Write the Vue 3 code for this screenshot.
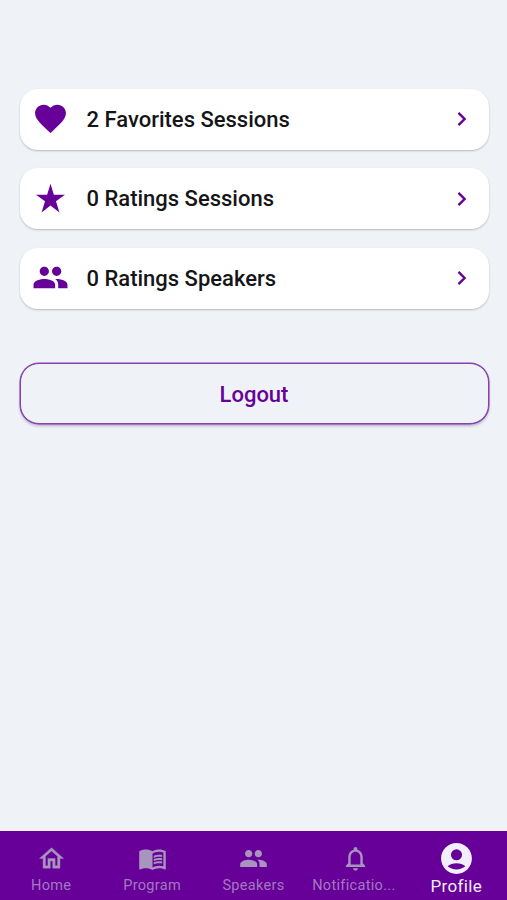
<script setup>
const paths = {
  heart: ['M12 21.35l-1.45-1.32C5.4 15.36 2 12.28 2 8.5 2 5.42 4.42 3 7.5 3c1.74 0 3.41.81 4.5 2.09C13.09 3.81 14.76 3 16.5 3 19.58 3 22 5.42 22 8.5c0 3.78-3.4 6.86-8.55 11.54L12 21.35z'],
  star: ['M12 2.4L14.18 9.5H21.4L15.55 13.75L17.8 21L12 16.6L6.2 21L8.45 13.75L2.6 9.5H9.82z'],
  people: ['M16 11c1.66 0 2.99-1.34 2.99-3S17.66 5 16 5s-3 1.34-3 3 1.34 3 3 3zm-8 0c1.66 0 2.99-1.34 2.99-3S9.66 5 8 5 5 6.34 5 8s1.34 3 3 3zm0 2c-2.33 0-7 1.17-7 3.5V19h14v-2.5c0-2.33-4.67-3.5-7-3.5zm8 0c-.29 0-.62.02-.97.05 1.16.84 1.97 1.97 1.97 3.45V19h6v-2.5c0-2.33-4.67-3.5-7-3.5z'],
  home: ['M12 5.69l5 4.5V18h-2v-6H9v6H7v-7.81l5-4.5M12 3L2 12h3v8h6v-6h2v6h6v-8h3L12 3z'],
  book: [
    'M17.5 4.5c-1.95 0-4.05.4-5.5 1.5-1.45-1.1-3.55-1.5-5.5-1.5S2.45 4.9 1 6v14.65c0 .65.73.45.75.45C3.1 20.45 5.05 20 6.5 20c1.95 0 4.05.4 5.5 1.5 1.35-.85 3.8-1.5 5.5-1.5 1.65 0 3.35.3 4.75 1.05.41.21.75-.19.75-.45V6c-1.49-1.12-3.63-1.5-5.5-1.5zm3.5 14c-1.1-.35-2.3-.5-3.5-.5-1.7 0-4.15.65-5.5 1.5V8c1.35-.85 3.8-1.5 5.5-1.5 1.2 0 2.4.15 3.5.5v11.5z',
    'M17.5 10.5c.88 0 1.73.09 2.5.26V9.1c-.79-.15-1.64-.24-2.5-.24-1.7 0-3.24.29-4.5.83v1.8c1.13-.64 2.7-.99 4.5-.99zM13 12.4v1.75c1.13-.64 2.7-.99 4.5-.99.88 0 1.73.09 2.5.26V11.8c-.79-.15-1.64-.24-2.5-.24-1.7 0-3.24.3-4.5.84zM17.5 14.23c-1.7 0-3.24.29-4.5.83v1.76c1.13-.64 2.7-.99 4.5-.99.88 0 1.73.09 2.5.26v-1.62c-.79-.16-1.64-.24-2.5-.24z',
  ],
  bell: ['M12 22c1.1 0 2-.9 2-2h-4c0 1.1.9 2 2 2zm6-6v-5c0-3.07-1.63-5.64-4.5-6.32V4c0-.83-.67-1.5-1.5-1.5s-1.5.67-1.5 1.5v.68C7.64 5.36 6 7.92 6 11v5l-2 2v1h16v-1l-2-2zm-2 1H8v-6c0-2.48 1.51-4.5 4-4.5s4 2.02 4 4.5v6z'],
  profile: ['M12 2C6.48 2 2 6.48 2 12s4.48 10 10 10 10-4.48 10-10S17.52 2 12 2zm0 4a3.6 3.6 0 1 1 0 7.2 3.6 3.6 0 0 1 0-7.2zM12 19.2c-2.2 0-4.2-.8-5.8-2.1C7.7 15.9 9.7 15.1 12 15.1s4.3.8 5.8 2C16.2 18.4 14.2 19.2 12 19.2z'],
}
const rows = [
  { icon: 'heart', label: '2 Favorites Sessions' },
  { icon: 'star', label: '0 Ratings Sessions' },
  { icon: 'people', label: '0 Ratings Speakers' },
]
const tabs = [
  { icon: 'home', label: 'Home' },
  { icon: 'book', label: 'Program' },
  { icon: 'people', label: 'Speakers' },
  { icon: 'bell', label: 'Notificatio...' },
  { icon: 'profile', label: 'Profile', active: true },
]
</script>

<template>
  <div class="screen">
    <main class="content">
      <div class="list">
        <button v-for="row in rows" :key="row.label" class="row">
          <svg class="row-icon" viewBox="0 0 24 24">
            <path v-for="d in paths[row.icon]" :key="d" :d="d" />
          </svg>
          <span class="row-label">{{ row.label }}</span>
          <svg class="chevron" viewBox="0 0 10 16"><path d="M1.5 1.8L7.6 8L1.5 14.2" /></svg>
        </button>
      </div>
      <button class="logout">Logout</button>
    </main>
    <nav class="tabs">
      <a v-for="tab in tabs" :key="tab.label" class="tab" :class="[tab.icon, { active: tab.active }]">
        <span class="tab-icon">
          <svg viewBox="0 0 24 24">
            <path v-for="d in paths[tab.icon]" :key="d" :d="d" />
          </svg>
        </span>
        <span class="tab-label">{{ tab.label }}</span>
      </a>
    </nav>
  </div>
</template>

<style>
body {
  margin: 0;
  background: #eff3f8;
}
</style>

<style scoped>
.screen {
  display: flex;
  flex-direction: column;
  height: 900px;
  background: #eff3f8;
  font-family: Roboto, sans-serif;
}
button {
  box-sizing: border-box;
  margin: 0;
  font-family: inherit;
}
.content {
  flex: 1;
  padding: 88.5px 18.5px 0 19.5px;
}
.list {
  display: flex;
  flex-direction: column;
  gap: 18.5px;
}
.row {
  display: flex;
  align-items: center;
  width: 100%;
  height: 61px;
  padding: 0 21.5px 0 12px;
  border: 0;
  border-radius: 18px;
  background: #fff;
  box-shadow: 0 1px 2px rgba(0, 0, 0, 0.24);
}
.row-icon {
  width: 37px;
  height: 37px;
  margin-top: -1px;
  fill: #660099;
}
.row-label {
  flex: 1;
  margin-left: 18px;
  padding-top: 1px;
  text-align: left;
  font-size: 22px;
  font-weight: 500;
  line-height: 26px;
  color: #151517;
}
.chevron {
  width: 10px;
  height: 16px;
  fill: none;
  stroke: #660099;
  stroke-width: 2.4;
}
.logout {
  display: block;
  width: 100%;
  height: 61.5px;
  margin-top: 54px;
  padding: 2px 0 0;
  border: 1px solid #8741ab;
  border-radius: 19px;
  background: #eff3f8;
  box-shadow: 0 0 0 0.5px #8741ab, 0 2px 3px rgba(30, 0, 60, 0.28);
  color: #660099;
  font-size: 22px;
  font-weight: 500;
}
.tabs {
  display: grid;
  grid-template-columns: repeat(5, 1fr);
  box-sizing: border-box;
  height: 69px;
  padding-top: 8px;
  background: #660099;
}
.tab {
  display: flex;
  flex-direction: column;
  align-items: center;
  color: #a994bd;
}
.tab-icon {
  display: flex;
  align-items: center;
  height: 38px;
}
.tab-icon svg {
  width: 29px;
  height: 29px;
  margin-top: 1px;
  fill: currentColor;
}
.home .tab-icon {
  padding-left: 2px;
}
.bell .tab-icon,
.book .tab-icon {
  padding-left: 1px;
}
.home .tab-icon svg {
  stroke: currentColor;
  stroke-width: 0.3;
}
.tab-label {
  font-size: 14.5px;
  line-height: 17px;
  letter-spacing: 0.32px;
  color: #a27abf;
  white-space: nowrap;
}
.home .tab-label {
  padding-left: 1px;
}
.bell .tab-label {
  padding-right: 2px;
}
.active {
  color: #f3eefb;
}
.active .tab-icon svg {
  width: 37px;
  height: 37px;
  margin-top: 0;
}
.active .tab-label {
  font-size: 17px;
  line-height: 18px;
  color: #f3eefb;
}
</style>
